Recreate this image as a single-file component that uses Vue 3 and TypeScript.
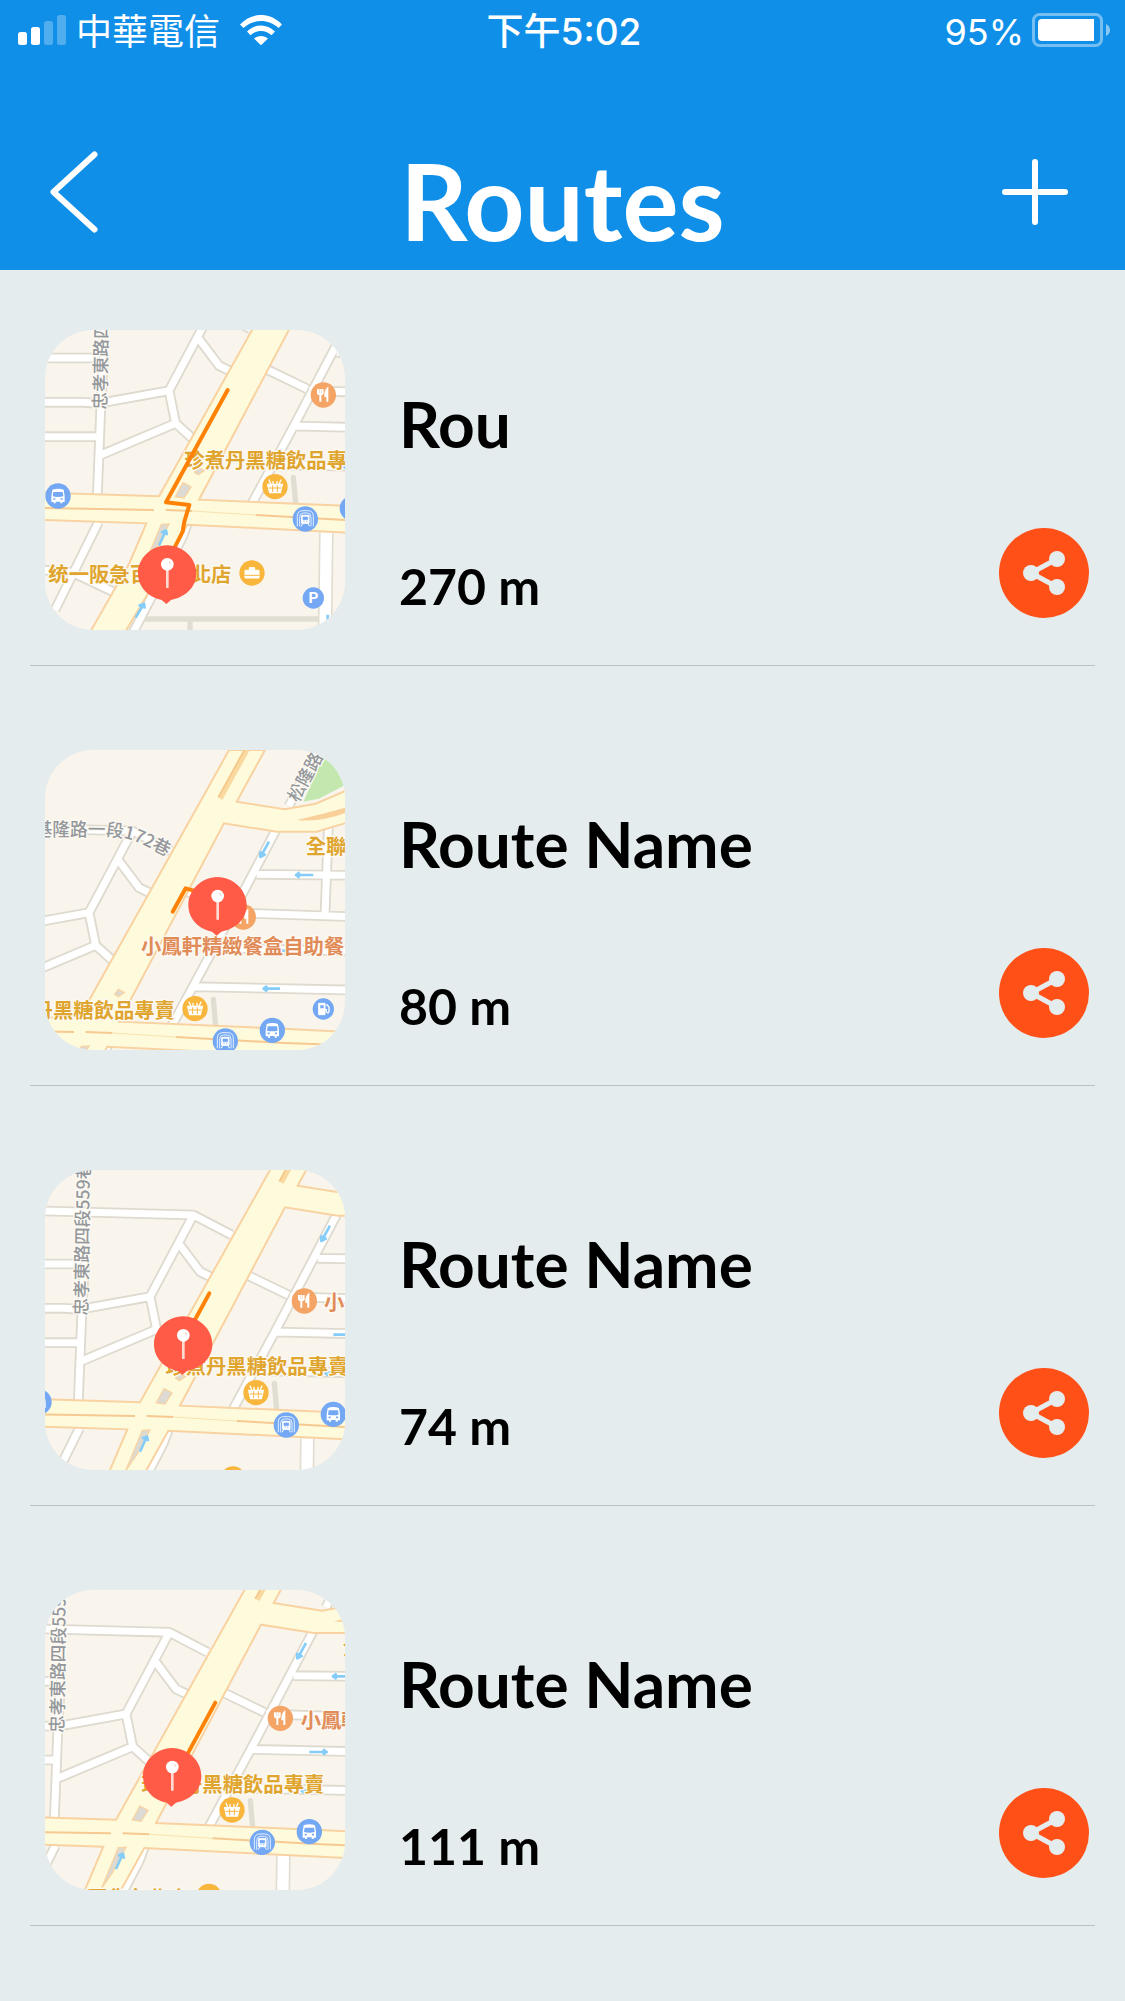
<script setup lang="ts">
interface Point {
  x: number
  y: number
}

interface MapLabel extends Point {
  text: string
  tone: 'shop' | 'food' | 'street'
  rotate?: number
}

interface Route {
  id: number
  name: string
  distance: string
  // Shift of the shared street map inside the 900-unit thumbnail
  offset: Point
  pin: Point
  track: string
  labels: MapLabel[]
  curvedStreet?: string
}

const drinkShop: MapLabel = { text: '珍煮丹黑糖飲品專賣', x: 406, y: 643, tone: 'shop' }
const lane559: MapLabel = { text: '忠孝東路四段559巷', x: 172, y: 467, tone: 'street', rotate: -89 }
const mall: MapLabel = { text: '统一阪急百貨台北店', x: -2, y: 985, tone: 'shop' }
const songlong: MapLabel = { text: '松隆路', x: 988, y: 82, tone: 'street', rotate: -62 }
const market: MapLabel = { text: '全聯', x: 1010, y: 234, tone: 'shop' }

const routes: Route[] = [
  {
    id: 1,
    name: 'Rou',
    distance: '270 m',
    offset: { x: 57, y: -198 },
    pin: { x: 411, y: 762 },
    track: 'M593 210 408 547 478 555 463 605 458 635 425 700',
    labels: [drinkShop, lane559, mall],
  },
  {
    id: 2,
    name: 'Route Name',
    distance: '80 m',
    offset: { x: -183, y: 108 },
    pin: { x: 562, y: 497 },
    track: 'M428 515 467 445 500 455',
    labels: [
      { text: '珍煮丹黑糖飲品專賣', x: 69, y: 725, tone: 'shop' },
      { text: '小鳳軒精緻餐盒自助餐', x: 516, y: 535, tone: 'food' },
      songlong,
      market,
    ],
    curvedStreet: '基隆路一段172巷',
  },
  {
    id: 3,
    name: 'Route Name',
    distance: '74 m',
    offset: { x: 0, y: 0 },
    pin: { x: 459, y: 555 },
    track: 'M538 400 470 525',
    labels: [drinkShop, lane559, { text: '小鳳軒', x: 882, y: 449, tone: 'food' }],
  },
  {
    id: 4,
    name: 'Route Name',
    distance: '111 m',
    offset: { x: -72, y: -8 },
    pin: { x: 426, y: 590 },
    track: 'M556 368 460 545',
    labels: [
      drinkShop,
      lane559,
      mall,
      songlong,
      market,
      { text: '小鳳軒', x: 884, y: 451, tone: 'food' },
    ],
  },
]

const lanes =
  'M-20 153H45L490 165 605 225M490 165 360 410 380 508 150 605M380 508 440 562' +
  'M450 255 510 335 545 352M164 300 155 470 145 725M148 805 18 1068' +
  'M-20 445H100L150 448 360 410M-20 548H150M-20 312H150' +
  'M655 347 775 405M922 160 735 515 608 750M863 295 1140 298M780 410 1140 422' +
  'M736 516 1140 525M673 632 1140 642M1078 155 1068 417M960 90 1043 -78' +
  'M-20 948 70 955 190 1012M415 810 400 850 250 1140'

const avenue =
  'M780 -78 720 30 330 727 -20 716V798L292 808 240 930 120 1140H225L355 920 415 812 945 838 1140 848' +
  'V768L945 758 450 737 765 142 923 167 1043 167 1140 138V40L1040 83 948 100 803 77 888 -78Z'

const arrows =
  'M900 197 876 240M874 226V243L890 234M330 875 350 830M336 836 351 829 354 844' +
  'M260 1091 284 1050M269 1056 285 1049 287 1064M1033 297H982M992 289 981 297 992 305' +
  'M910 524H960M951 516 962 524 951 532M933 638H885M895 630 884 638 895 646M836 1128V1082'
</script>

<template>
  <div class="screen">
    <header class="top">
      <div class="status">
        <div class="carrier">
          <svg class="signal" viewBox="0 0 48 30" aria-hidden="true">
            <rect y="17" width="9" height="13" rx="2.5" />
            <rect x="13" y="12" width="9" height="18" rx="2.5" />
            <rect x="26" y="6" width="9" height="24" rx="2.5" opacity=".27" />
            <rect x="39" width="9" height="30" rx="2.5" opacity=".27" />
          </svg>
          <span class="carrier-name">中華電信</span>
          <svg class="wifi" viewBox="0 0 42 30" aria-hidden="true">
            <path d="M0 9.5C12-3.2 30-3.2 42 9.500L38.500 13C28.500 3.700 13.500 3.700 3.500 13Z" />
            <path d="M7 16.500C15 8.500 27 8.500 35 16.500L31.500 20.300C25.500 14.500 16.500 14.500 10.500 20.300Z" />
            <path d="M14 23.600C18 20 24 20 28 23.600L21 30.300Z" />
          </svg>
        </div>
        <span class="clock">下午5:02</span>
        <div class="power">
          <span class="percent">95%</span>
          <svg class="battery" viewBox="0 0 78 34" aria-hidden="true">
            <rect x="1.500" y="1.500" width="68" height="31" rx="6" fill="none" stroke="#fff" stroke-width="3" opacity=".42" />
            <path d="M10 6H62V28H10Q6 28 6 24V10Q6 6 10 6Z" />
            <path d="M74 11Q78 13 78 17T74 23Z" opacity=".5" />
          </svg>
        </div>
      </div>
      <nav class="bar">
        <button class="icon-button back" type="button" aria-label="Back">
          <svg viewBox="0 0 48 82" width="48" height="82">
            <path d="M44.500 3.500 3.500 41 44.500 78.500" />
          </svg>
        </button>
        <h1>Routes</h1>
        <button class="icon-button add" type="button" aria-label="Add route">
          <svg viewBox="0 0 66 66" width="66" height="66">
            <path d="M33 3V63M3 33H63" />
          </svg>
        </button>
      </nav>
    </header>

    <main>
      <ul class="routes">
        <li v-for="route in routes" :key="route.id" class="route">
          <svg class="map" viewBox="45 30 900 900" role="img" :aria-label="`Map of ${route.name}`">
            <rect x="45" y="30" width="900" height="900" fill="#f9f5ed" />
            <g :transform="`translate(${route.offset.x} ${route.offset.y})`">
              <path d="M1063-58 1003 77 1050 68 1128 27V-78H1075Z" fill="#c2e8b0" />
              <path class="grey" d="M733 670 740 750M273 1095H810M423 1095V1140" />
              <path class="lane-edge" :d="lanes" />
              <path class="lane" :d="lanes" />
              <path d="M832 836 828 1140" stroke="#e2ddd2" stroke-width="44" />
              <path d="M832 836 828 1140" stroke="#fff" stroke-width="34" />
              <path class="avenue" :d="avenue" />
              <path class="divider" d="M-20 762 315 768M350 768 430 771M620 783 945 801 1140 808" />
              <path d="M430 771 620 783" stroke="#f9e2b0" stroke-width="3" />
              <path d="M833 -78 753 67" stroke="#fad9a0" stroke-width="17" />
              <path d="M826 -78 748 64" stroke="#f6c485" stroke-width="4" />
              <path d="M983 132Q1060 116 1140 92V106Q1060 140 983 132Z" fill="#fad09a" />
              <path class="island" d="M402 686 426 699 405 732 379 728ZM337 811 360 810 320 885 287 932ZM448 640 466 650 448 662 437 655Z" />
              <path class="arrows" :d="arrows" />

              <g transform="translate(678 698)">
                <circle r="38" fill="#f8b63d" />
                <path d="M-22-7H22L16 18H-16ZM-12-7-18-20M12-7 18-20M-6-7V-16M6-7V-16" fill="#fff" stroke="#fff" stroke-width="4" stroke-linecap="round" />
                <path d="M-19 4H19M-7-4V16M7-4V16" stroke="#f8b63d" stroke-width="3" />
              </g>
              <g transform="translate(769 795)">
                <circle r="38" fill="#74a8f4" />
                <path d="M-24 22V-8Q-24-25-7-25H7Q24-25 24-8V22M-17 22V-6Q-17-18-6-18H6Q17-18 17-6V22" fill="none" stroke="#fff" stroke-width="3" opacity=".8" />
                <path d="M-11-11H11V13H-11ZM-7 13-13 22M7 13 13 22" fill="#fff" stroke="#fff" stroke-width="3" />
                <path d="M-7-6H7V2H-7ZM-6 7H-2M2 7H6" fill="#74a8f4" stroke="#74a8f4" stroke-width="2" />
              </g>
              <g v-for="x in [27, 910]" :key="x" :transform="`translate(${x} ${x < 100 ? 726 : 763})`">
                <circle r="38" fill="#74a8f4" />
                <path d="M-17-19Q0-25 17-19L20 0V18H13V22H7V17H-7V22H-13V18H-20V0Z" fill="#fff" />
                <path d="M-14-12H14L16 1Q0 5-16 1Z" fill="#74a8f4" />
                <path d="M-14 9H-8M8 9H14" stroke="#74a8f4" stroke-width="5" />
              </g>
              <g transform="translate(823 423)">
                <circle r="38" fill="#f4a465" />
                <path d="M-16-18V-5Q-9 3-2-5V-18M-9-18V20M12 20V-18Q5-10 6 3H12" fill="none" stroke="#fff" stroke-width="6" />
              </g>
              <g transform="translate(609 957)">
                <circle r="38" fill="#f8b63d" />
                <path d="M-21-8H21V15H-21ZM-8-9V-16H8V-9" fill="#fff" stroke="#fff" stroke-width="3" />
                <path d="M-22 7H22" stroke="#f8b63d" stroke-width="3" />
              </g>
              <g transform="translate(793 1032)">
                <circle r="32" fill="#74a8f4" />
                <text class="parking" x="0" y="16" text-anchor="middle">P</text>
              </g>
              <g transform="translate(1063 699)">
                <circle r="32" fill="#74a8f4" />
                <path d="M-14-17H5V17H-14Z" fill="#fff" stroke="#fff" stroke-width="3" />
                <path d="M9-14 17-6V9Q13 15 9 8V2H5" fill="none" stroke="#fff" stroke-width="4" />
                <path d="M-9-11H1V-2H-9Z" fill="#74a8f4" />
              </g>

              <text
                v-for="label in route.labels"
                :key="label.text"
                :class="['label', label.tone]"
                :transform="`translate(${label.x} ${label.y}) rotate(${label.rotate ?? 0})`"
              >{{ label.text }}</text>
            </g>

            <template v-if="route.curvedStreet">
              <path id="street-curve" d="M14 287H190Q275 287 320 306T460 376" fill="none" />
              <text class="label street"><textPath href="#street-curve">{{ route.curvedStreet }}</textPath></text>
            </template>

            <path class="track" :d="route.track" />
            <g :transform="`translate(${route.pin.x} ${route.pin.y})`">
              <path
                d="M0-86C51-84 88-46 88-2 88 40 55 70 12 78L-2 90-16 78C-58 70-87 38-87-2-87-46-50-84 0-86Z"
                fill="#ff5b46"
              />
              <path d="M1-15V42" stroke="#ffd9d3" stroke-width="8" />
              <circle cx="1" cy="-29" r="19" fill="#fff" />
              <path d="M6-38A9 9 0 0 1 10-30" fill="none" stroke="#f6d5cf" stroke-width="4" />
            </g>
          </svg>

          <div class="details">
            <h2>{{ route.name }}</h2>
            <p>{{ route.distance }}</p>
          </div>

          <button class="share" type="button" :aria-label="`Share ${route.name}`">
            <svg viewBox="0 0 90 90" width="90" height="90">
              <path d="M58 31 32 45 58 59" fill="none" stroke="#e4eced" stroke-width="5" />
              <circle cx="58" cy="31" r="8" />
              <circle cx="32" cy="45" r="8" />
              <circle cx="58" cy="59" r="8" />
            </svg>
          </button>
        </li>
      </ul>
    </main>
  </div>
</template>

<style>
body {
  margin: 0;
  background: #e4eced;
}
</style>

<style scoped>
.screen {
  min-height: 100vh;
  background: #e4eced;
  color: #000;
  font-family: 'Chalkboard SE', Lato, 'Noto Sans', sans-serif;
}

.top {
  background: #108fe8;
  color: #fff;
}

.status {
  display: grid;
  grid-template-columns: 1fr auto 1fr;
  align-items: center;
  height: 60px;
  padding: 0 15px 0 18px;
  font-family: Inter, 'Noto Sans CJK TC', sans-serif;
  font-size: 36px;
  line-height: 56px;
}

.status svg {
  display: block;
  fill: #fff;
}

.status span {
  padding-top: 4px;
}

.carrier,
.power {
  display: flex;
  align-items: center;
}

.carrier-name {
  margin: 0 20px 0 10px;
  font-weight: 400;
}

.signal {
  width: 48px;
  height: 30px;
}

.wifi {
  width: 42px;
  height: 30px;
}

.clock {
  font-size: 37px;
  font-weight: 500;
}

.power {
  justify-content: flex-end;
  gap: 8px;
}

.battery {
  width: 78px;
  height: 34px;
}

.bar {
  display: grid;
  grid-template-columns: 1fr auto 1fr;
  align-items: center;
  height: 156px;
  padding: 54px 50px 0;
}

h1 {
  margin: 0;
  padding-top: 16px;
  font-size: 105px;
  font-weight: 700;
  line-height: 120px;
}

.icon-button {
  display: block;
  padding: 0;
  border: 0;
  background: none;
  cursor: pointer;
}

.icon-button svg {
  display: block;
  fill: none;
  stroke: #fff;
  stroke-width: 6px;
  stroke-linecap: round;
  stroke-linejoin: round;
}

.back {
  justify-self: start;
}

.add {
  justify-self: end;
  padding-right: 7px;
}

.routes {
  display: grid;
  gap: 24px;
  margin: 0;
  padding: 0 30px;
  list-style: none;
}

.route {
  display: grid;
  grid-template-columns: 300px 1fr 90px;
  column-gap: 54px;
  padding: 60px 6px 35px 15px;
  border-bottom: 1px solid #b8c2c5;
}

.map {
  display: block;
  width: 300px;
  height: 300px;
  overflow: hidden;
  border-radius: 48px;
}

.details {
  display: flex;
  flex-direction: column;
  justify-content: space-between;
  padding: 54px 0 14px;
}

h2,
p {
  margin: 0;
}

h2 {
  font-size: 64px;
  font-weight: 700;
  line-height: 80px;
}

p {
  font-size: 50px;
  font-weight: 700;
  line-height: 60px;
}

.share {
  align-self: end;
  width: 90px;
  height: 90px;
  margin-bottom: 12px;
  padding: 0;
  border: 0;
  border-radius: 50%;
  background: #ff5017;
  cursor: pointer;
}

.share svg {
  display: block;
  fill: #e4eced;
}

.lane-edge,
.lane,
.grey,
.divider,
.arrows,
.track {
  fill: none;
  stroke-linejoin: round;
}

.lane-edge {
  stroke: #dfdacf;
  stroke-width: 32px;
}

.lane {
  stroke: #fff;
  stroke-width: 21px;
}

.grey {
  stroke: #e0ddd3;
  stroke-width: 16px;
  stroke-linecap: round;
}

.avenue {
  fill: #fdfbdb;
  stroke: #f9d2a2;
  stroke-width: 6px;
}

.divider {
  stroke: #f6c992;
  stroke-width: 6px;
}

.island {
  fill: #dcdad2;
  stroke: #f8d3a4;
  stroke-width: 4px;
}

.arrows {
  stroke: #85cdf8;
  stroke-width: 8px;
}

.track {
  stroke: #ff8206;
  stroke-width: 12px;
  stroke-linecap: round;
}

.label {
  font-family: 'Noto Sans CJK TC', 'Noto Sans CJK SC', sans-serif;
  font-size: 61px;
  font-weight: 700;
  paint-order: stroke;
  stroke: #fdfaf3;
  stroke-width: 8px;
  stroke-linejoin: round;
}

.shop {
  fill: #e0a52f;
}

.food {
  fill: #e18b58;
}

.street {
  fill: #94989c;
  font-size: 53px;
  font-weight: 500;
}

.parking {
  fill: #fff;
  font-family: Roboto, sans-serif;
  font-size: 46px;
  font-weight: 700;
}
</style>
